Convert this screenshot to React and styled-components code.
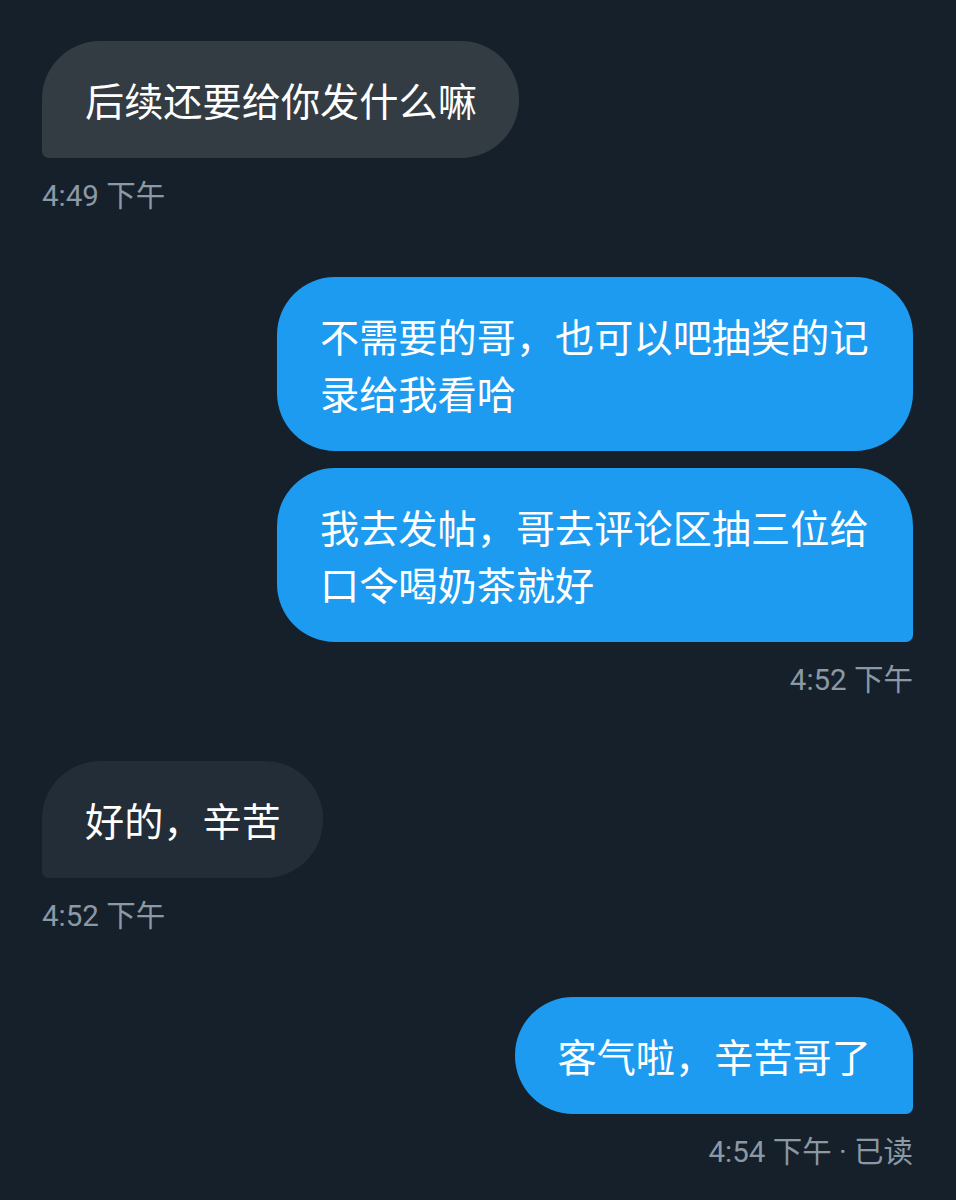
import React from 'react'
import styled, { createGlobalStyle } from 'styled-components'

const Global = createGlobalStyle`
  html, body {
    margin: 0;
    padding: 0;
    background: #15202b;
  }
  body {
    font-family: Roboto, "Noto Sans CJK SC", sans-serif;
  }
`

const messages = [
  { side: 'in', shade: '#333c43', bubbles: ['后续还要给你发什么嘛'], time: '4:49 下午' },
  {
    side: 'out',
    bubbles: ['不需要的哥，也可以吧抽奖的记录给我看哈', '我去发帖，哥去评论区抽三位给口令喝奶茶就好'],
    time: '4:52 下午',
  },
  { side: 'in', shade: '#232d37', bubbles: ['好的，辛苦'], time: '4:52 下午' },
  { side: 'out', bubbles: ['客气啦，辛苦哥了'], time: '4:54 下午 · 已读' },
]

const App = () => {
  return (
    <Page>
      <Global />
      {messages.map((m, i) => (
        <Group key={i} $side={m.side}>
          {m.bubbles.map((text, j) => (
            <Bubble
              key={j}
              $side={m.side}
              $shade={m.shade}
              $last={j === m.bubbles.length - 1}
            >
              {text}
            </Bubble>
          ))}
          <Time>{m.time}</Time>
        </Group>
      ))}
    </Page>
  )
}

const Page = styled.div`
  min-height: 1200px;
  box-sizing: border-box;
  padding: 41px 43px 0 42px;
  display: flex;
  flex-direction: column;
  gap: 63px;
`

const Group = styled.div`
  display: flex;
  flex-direction: column;
  align-items: ${(p) => (p.$side === 'out' ? 'flex-end' : 'flex-start')};
  gap: 17px;
`

const Bubble = styled.div`
  box-sizing: border-box;
  max-width: 636px;
  padding: 30px 42px 30px 43px;
  font-family: "Noto Sans CJK SC", sans-serif;
  font-size: 39.2px;
  line-height: 57px;
  color: #ffffff;
  background: ${(p) => (p.$side === 'out' ? '#1d9bf0' : p.$shade)};
  border-radius: ${(p) =>
    p.$side === 'out'
      ? p.$last
        ? '58px 58px 7px 58px'
        : '58px'
      : '58px 58px 58px 7px'};
`

const Time = styled.div`
  margin-top: 3px;
  font-family: Roboto, "Noto Sans CJK SC", sans-serif;
  font-size: 29.5px;
  line-height: 36px;
  color: #8b98a5;
`

export default App
